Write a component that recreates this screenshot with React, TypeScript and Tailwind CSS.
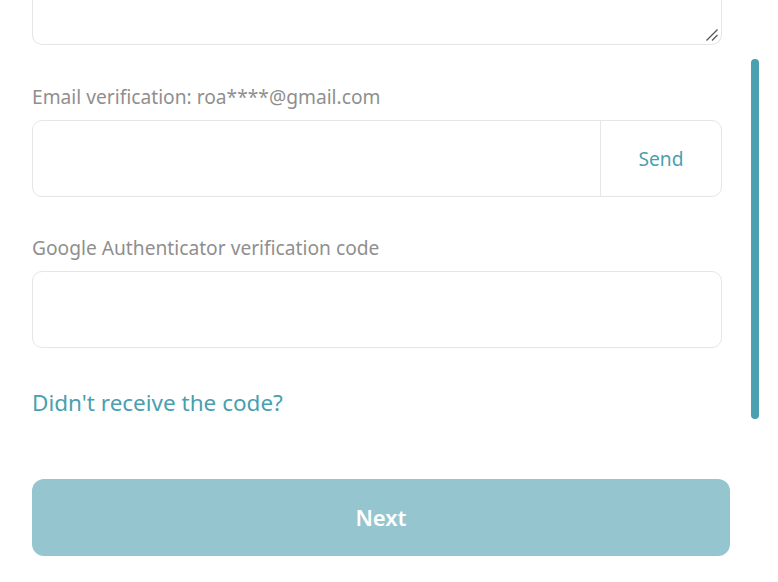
import React from "react";

export default function App() {
  return (
    <div
      className="relative w-[778px] h-[582px] overflow-hidden bg-white"
      style={{ fontFamily: '"Noto Sans", "Open Sans", sans-serif' }}
    >
      <div className="pl-[32px] w-[730px] flex flex-col">
        {/* textarea bottom part */}
        <div className="relative w-[690px] h-[45px] border-x border-b border-[#e6e6e6] rounded-b-[10px]">
          <svg className="absolute right-[2px] bottom-[2px]" width="14" height="14" viewBox="0 0 14 14">
            <line x1="1.5" y1="12.5" x2="12.5" y2="1.5" stroke="#555" strokeWidth="1.3" />
            <line x1="7" y1="12.5" x2="12.5" y2="7" stroke="#555" strokeWidth="1.3" />
          </svg>
        </div>

        <div className="mt-[40px] h-[24px] leading-[24px] text-[19.2px] text-[#8f8f8f] whitespace-nowrap">
          Email verification: roa****@gmail.com
        </div>
        <div className="mt-[11px] w-[690px] h-[77px] border border-[#e6e6e6] rounded-[10px] flex">
          <div className="flex-1" />
          <div className="w-[121px] pt-[2px] border-l border-[#e6e6e6] flex items-center justify-center text-[19.2px] text-[#4a9fb0]">
            Send
          </div>
        </div>

        <div className="mt-[39px] h-[24px] leading-[24px] text-[19.2px] text-[#8f8f8f] whitespace-nowrap">
          Google Authenticator verification code
        </div>
        <div className="mt-[11px] w-[690px] h-[77px] border border-[#e6e6e6] rounded-[10px]" />

        <div className="mt-[41px] h-[28px] leading-[28px] text-[22.5px] text-[#4a9fb0] whitespace-nowrap">
          Didn't receive the code?
        </div>

        <button className="mt-[62px] w-[698px] h-[77px] rounded-[12px] bg-[#95c6d0] text-white text-[22px] font-semibold flex items-center justify-center">
          Next
        </button>
      </div>

      {/* scrollbar */}
      <div className="absolute left-[751px] top-[59px] w-[8px] h-[360px] rounded-full bg-[#4a9fb0]" />
    </div>
  );
}
